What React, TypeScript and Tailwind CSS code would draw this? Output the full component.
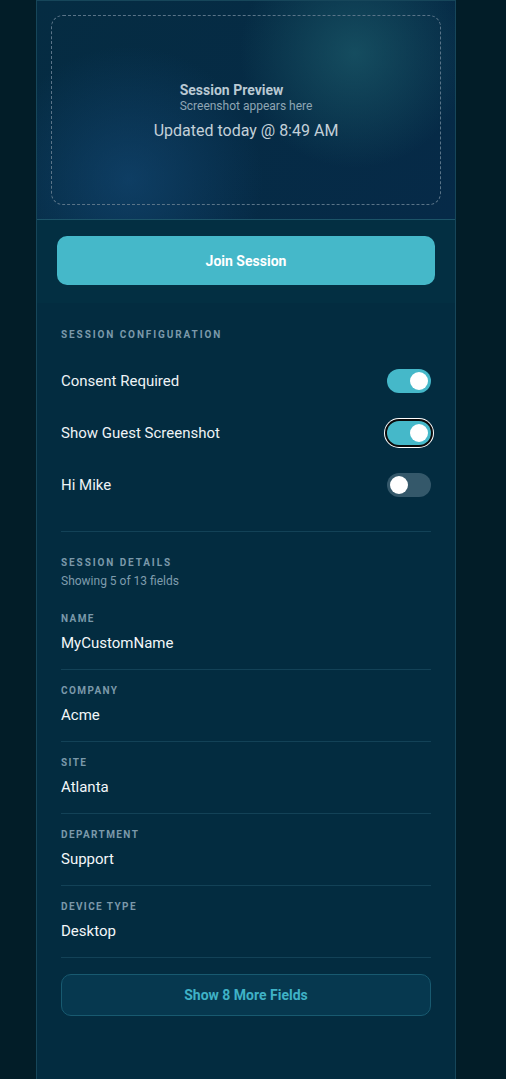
import React from "react";

function Toggle({ on, focused }: { on: boolean; focused?: boolean }) {
  return (
    <div
      className={
        "relative w-[44px] h-[24px] rounded-full flex items-center px-[3px] " +
        (on ? "bg-[#45b8c9] justify-end" : "bg-[#34586a] justify-start") +
        (focused ? " shadow-[0_0_0_2px_#0a0a0a,0_0_0_3px_#ffffff]" : "")
      }
    >
      <div className="w-[18px] h-[18px] rounded-full bg-white" />
    </div>
  );
}

const fields = [
  ["NAME", "MyCustomName"],
  ["COMPANY", "Acme"],
  ["SITE", "Atlanta"],
  ["DEPARTMENT", "Support"],
  ["DEVICE TYPE", "Desktop"],
];

export default function App() {
  return (
    <div
      className="min-h-screen bg-[#021d28] flex pl-[36px]"
      style={{ fontFamily: "Roboto, 'Noto Sans', sans-serif" }}
    >
      <div className="w-[420px] min-h-screen bg-[#042d41] border-x border-t border-[#16465a] flex flex-col">
        <div className="h-[219px] p-[14px] border-b border-[#1c5468] bg-[radial-gradient(circle_at_76%_24%,rgba(26,88,104,0.75),transparent_32%),radial-gradient(circle_at_22%_82%,rgba(20,74,120,0.6),transparent_36%),linear-gradient(135deg,#052c42,#062a48)]">
          <div className="h-[190px] pt-[6px] rounded-[12px] border border-dashed border-[#5a7488] flex flex-col items-center justify-center">
            <div className="flex flex-col items-start -mt-[4px]">
              <div className="text-[14px] font-bold leading-[18px] text-[#b9c9d3]">Session Preview</div>
              <div className="text-[12px] leading-[14px] text-[#8fa6b4]">Screenshot appears here</div>
            </div>
            <div className="mt-[8px] text-[16px] leading-[20px] text-[#c3d0d8]">Updated today @ 8:49 AM</div>
          </div>
        </div>
        <div className="pt-[16px] pb-[18px] px-[20px] bg-[#032f42]">
          <button className="w-full h-[49px] pt-[1px] rounded-[10px] bg-[#45b8c9] text-white text-[14px] font-bold">
            Join Session
          </button>
        </div>
        <div className="flex-1 bg-[#032c40] px-[24px] pt-[24px]">
          <div className="text-[10px] font-bold leading-[16px] tracking-[0.19em] text-[#7b99aa]">
            SESSION CONFIGURATION
          </div>
          <div className="mt-[26px] flex flex-col gap-[28px]">
            {[
              ["Consent Required", true, false],
              ["Show Guest Screenshot", true, true],
              ["Hi Mike", false, false],
            ].map(([label, on, focused]) => (
              <div key={label as string} className="flex items-center justify-between h-[24px]">
                <span className="text-[15px] text-[#eef3f6]">{label as string}</span>
                <Toggle on={on as boolean} focused={focused as boolean} />
              </div>
            ))}
          </div>
          <div className="mt-[34px] border-t border-[#134257]" />
          <div className="pt-[24px] mb-[9px]">
            <div className="text-[10px] font-bold leading-[14px] tracking-[0.19em] text-[#7b99aa]">
              SESSION DETAILS
            </div>
            <div className="mt-[3px] text-[12px] leading-[16px] text-[#7f9cad]">Showing 5 of 13 fields</div>
          </div>
          {fields.map(([k, v]) => (
            <div key={k} className="pt-[14px] pb-[16px] border-b border-[#134257]">
              <div className="text-[10px] font-bold leading-[14px] tracking-[0.14em] text-[#7b99aa]">{k}</div>
              <div className="mt-[7px] text-[15px] leading-[20px] text-[#f3f7f9]">{v}</div>
            </div>
          ))}
          <button className="mt-[16px] w-full h-[42px] rounded-[10px] border border-[#185a70] bg-[#06384f] text-[#3fb2c6] text-[14px] font-bold">
            Show 8 More Fields
          </button>
        </div>
      </div>
    </div>
  );
}
